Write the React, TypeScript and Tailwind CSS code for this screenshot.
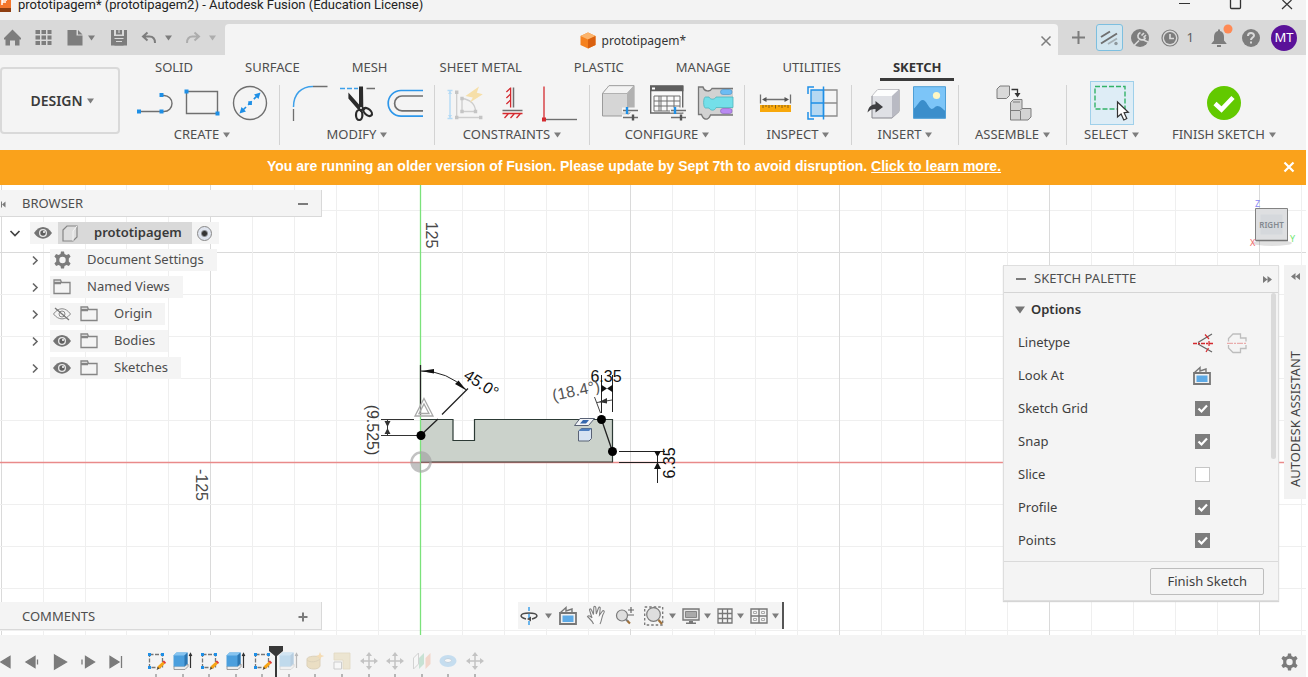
import React, { useState } from "react"

const RIBBON_TABS = [
  "SOLID",
  "SURFACE",
  "MESH",
  "SHEET METAL",
  "PLASTIC",
  "MANAGE",
  "UTILITIES",
  "SKETCH",
]

interface IconProps {
  w?: number
  h?: number
  className?: string
  children: React.ReactNode
}

function Svg({ w = 36, h = 36, className = "", children }: IconProps) {
  return (
    <svg
      width={w}
      height={h}
      viewBox={`0 0 ${w} ${h}`}
      fill="none"
      aria-hidden="true"
      className={`shrink-0 overflow-visible ${className}`}
    >
      {children}
    </svg>
  )
}

function Caret({ className = "text-[#7d7d7d]" }: { className?: string }) {
  return (
    <Svg w={7} h={6} className={className}>
      <path d="M0 0.5h7L3.5 5.5z" fill="currentColor" />
    </Svg>
  )
}

/* ---------- ribbon icons ---------- */

const GRAY = "#6f6f6f"
const BLUE = "#1e8fe6"
const RED = "#d42a2f"

const LineIcon = () => (
  <Svg>
    <path d="M3 26.5h22M26 10.5h2a8 8 0 0 1 0 16h-2" stroke={GRAY} strokeWidth="1.4" />
    <path d="M1 24.5h4v4H1zM23.5 24.5h4v4h-4zM23.5 8h4v4h-4z" fill={BLUE} />
  </Svg>
)

const RectIcon = () => (
  <Svg>
    <path d="M2.5 6.5h31v22h-31z" stroke={GRAY} strokeWidth="1.4" />
    <path d="M0.5 4.5h4v4h-4zM31.5 26.5h4v4h-4z" fill={BLUE} />
  </Svg>
)

const CircleIcon = () => (
  <Svg>
    <circle cx="18" cy="18" r="16.5" stroke={GRAY} strokeWidth="1.4" />
    <path d="M10.5 25.5L25.5 10.5" stroke={BLUE} strokeWidth="1.6" strokeDasharray="5 3" />
    <path d="M28.5 7.5l-2 6.5-4.5-4.5zM7.5 28.5l2-6.5 4.5 4.5zM16.3 16.3h3.6v3.6h-3.6z" fill={BLUE} />
  </Svg>
)

const FilletIcon = () => (
  <Svg>
    <path d="M2.5 22C2.5 9 10 1.5 22 1.5" stroke="#3da0ea" strokeWidth="1.5" />
    <path d="M22 1.5h14.5M2.5 24v12" stroke={GRAY} strokeWidth="1.3" />
  </Svg>
)

const TrimIcon = () => (
  <Svg>
    <path d="M1 3.5h18" stroke="#3da0ea" strokeWidth="1.6" strokeDasharray="5 2" />
    <path d="M27.5 3.5H36" stroke={GRAY} strokeWidth="1.5" />
    <path d="M20 1.5h4l0.3 20.5 2.4 2-5 3-3.4-3.3L9.4 13.5V7.5l10.6 12z" fill="#2b2b2b" />
    <ellipse cx="20.2" cy="30" rx="3.2" ry="5" stroke="#2b2b2b" strokeWidth="2.2" />
    <ellipse cx="28.7" cy="27" rx="3" ry="5" transform="rotate(-48 28.7 27)" stroke="#2b2b2b" strokeWidth="2.2" />
    <circle cx="22" cy="23" r="1" fill="#f4f4f4" />
  </Svg>
)

const OffsetIcon = () => (
  <Svg>
    <path d="M36 5.5H14a12.8 12.8 0 0 0 0 25.6h22" stroke="#2d97ea" strokeWidth="1.7" />
    <path d="M36 11H15a7.4 7.4 0 0 0 0 14.8h21" stroke={GRAY} strokeWidth="1.7" />
  </Svg>
)

const AutoConstrainIcon = () => (
  <Svg>
    <path d="M1.5 5.5h5M1.5 33.5h5M4 5.5v28" stroke="#b4daf5" strokeWidth="1.4" />
    <path d="M2 9l2-3 2 3zM2 30l2 3 2-3z" fill="#b4daf5" />
    <path d="M10.7 7v25.5H35M16 13.5v13h13.5c0-7-5-12-13.5-13" stroke="#cdcdcd" strokeWidth="1.3" />
    <path d="M9 5.5h3.4v3.4H9zM9 30.8h3.4v3.4H9zM33 30.8h3.4v3.4H33zM14.3 11.8h3.4v3.4h-3.4zM14.3 24.8h3.4v3.4h-3.4zM27.8 24.8h3.4v3.4h-3.4z" fill="#c4c4c4" />
    <path d="M33 1.5L19.5 11l7.3 1.5-2.8 5 12.8-8.2-6-1.6z" fill="#f6dfa9" />
  </Svg>
)

const HorizontalVerticalIcon = () => (
  <Svg>
    <path d="M19.5 2.5v20M8.5 25.5h20" stroke={GRAY} strokeWidth="1.5" />
    <path
      d="M16.6 2.5v20M16.6 3l-4.2 4M16.6 9l-4.2 4M16.6 15l-4.2 4M8.5 28.5h20M14.5 28.5l-4 4.5M20.5 28.5l-4 4.5M26.5 28.5l-4 4.5"
      stroke={RED}
      strokeWidth="1.3"
    />
  </Svg>
)

const PerpendicularIcon = () => (
  <Svg>
    <path d="M2 1.5v33" stroke={RED} strokeWidth="1.3" />
    <path d="M4 34.5h31" stroke={GRAY} strokeWidth="1.4" />
    <path d="M0 32.5h4v4H0z" fill={RED} />
  </Svg>
)

// slider pair shown in the corner of the "configure" icons
const Sliders = () => (
  <g>
    <path d="M21 25h16M21 32h16" stroke="#f4f4f4" strokeWidth="5" />
    <path d="M22 25.5h15M22 32.5h15" stroke={GRAY} strokeWidth="1.6" />
    <path d="M26 22v7" stroke={BLUE} strokeWidth="2.4" />
    <path d="M32 29.5v6" stroke="#555" strokeWidth="2.4" />
  </g>
)

const ConfigureModelIcon = () => (
  <Svg>
    <path d="M1.5 8.5L8 0.7h25v23l-7 7.3H1.5z" fill="#d6d6d6" stroke="#9b9b9b" />
    <path d="M1.5 8.5L8 0.7h25l-7 7.8z" fill="#f3f3f3" stroke="#9b9b9b" strokeWidth="0.7" />
    <path d="M26 8.5l7-7.8v23L26 31z" fill="#b1b1b1" />
    <Sliders />
  </Svg>
)

const ConfigureTableIcon = () => (
  <Svg>
    <path d="M1.7 1h32v27h-32z" fill="#fafafa" stroke="#666" strokeWidth="1.4" />
    <path d="M1 0.7h33.4v5.6H1z" fill="#5e5e5e" />
    <path d="M3 2.5h3v2H3z" fill="#fff" />
    <path d="M5 11h26v15H5zM5 16h26M5 21h26M10 11v15M12 11v15M18 11v15M25 11v15" stroke={GRAY} />
    <Sliders />
  </Svg>
)

const ThemeTableIcon = () => (
  <Svg>
    <path d="M1.5 2H6c1 4.500 7 5.500 9 1.500h21V30H13.500c-2 6-7 6-9-.5h-3z" fill="#d2d2d2" />
    <path d="M36 3.500H15c-2 4-8 3-9-1.500H1.500v27.500h3c2 6 7 6 9 0.500H36" stroke="#777" strokeWidth="1.300" />
    <path d="M36 12H19c-1 2.800-6 2.800-7 0H8.500c-2.500 0-2.500 11 0 11H12c1.500 3 6 3 7-.5h17z" fill="#74dfe9" stroke="#4fb5be" strokeWidth="0.800" />
    <rect x="23.500" y="4.500" width="11.500" height="5" rx="2.500" fill="#6cbcf4" stroke="#5698c9" strokeWidth="0.700" />
    <rect x="23.500" y="23.500" width="11.500" height="5" rx="2.500" fill="#b98af2" stroke="#9268c6" strokeWidth="0.700" />
  </Svg>
)

const MeasureIcon = () => (
  <Svg>
    <path d="M4.500 9.500v9M34.500 9.500v9M8 14.500h23" stroke="#707070" strokeWidth="1.300" />
    <path d="M6 14.500l4.500-2.500v5zM33 14.500l-4.500-2.500v5z" fill="#555" />
    <path d="M4 20h31v7H4z" fill="#f8a80b" />
    <path d="M7 20v3M10 20v2M13 20v3M16 20v2M19.500 20v3.500M23 20v2M26 20v3M29 20v2M32 20v3" stroke="#8c6012" />
  </Svg>
)

const SectionIcon = () => (
  <Svg>
    <path d="M20 5h13v26H20M20 18h13" stroke="#8c8c8c" strokeWidth="1.300" />
    <path d="M7 5h12.500v26H7z" fill="#b5d8f2" stroke={BLUE} strokeWidth="1.300" />
    <path d="M7 18h12.500M19.500 1.500v33M4 9V2h6M4 27v7h6" stroke={BLUE} strokeWidth="1.500" />
  </Svg>
)

const InsertDeriveIcon = () => (
  <Svg>
    <path d="M9 11l6-6.500h21v22L29 33H9z" fill="#dfe0e5" stroke="#85858c" />
    <path d="M9 11l6-6.500h21L29 11z" fill="#fdfdfd" />
    <path d="M29 11l7-6.500v22L29 33z" fill="#b9bac3" />
    <path d="M4.500 27.500c1-6 4-8 8-8.300V16l7.500 6-7.500 5.500V24c-4 0-6 1-8 3.500z" fill="#3f3f42" />
  </Svg>
)

const InsertImageIcon = () => (
  <Svg>
    <path d="M2.500 1.700h32v31.600h-32z" fill="#7cc5f8" />
    <circle cx="25.500" cy="10.500" r="3.600" fill="#fdf7c4" />
    <path d="M2.500 24c4-3 6-9 9-9 4 0 6 8 9 9 3 0 3-3 6-3 3 0 5 3 8 5v7.300h-32z" fill="#3b8ecb" />
    <path d="M2.500 1.700h32v31.600h-32z" stroke="#4f9fd6" />
  </Svg>
)

const AssembleIcon = () => (
  <Svg>
    <path d="M2 4l3-3h9.500v9.500l-3 3H2z" fill="#d9d9d9" stroke="#7c7c7c" />
    <path d="M16.500 4.500h6V9" stroke="#333" strokeWidth="1.300" />
    <path d="M19.500 8h6l-3 4.500z" fill="#333" />
    <path d="M15.500 17.500l3-3h8.500v9h9v8.500l-3 3H15.500z" fill="#d3d3d3" stroke="#7c7c7c" />
    <path d="M15.500 25.500h9.500l2-2M25.500 26v9M18 17h7" stroke="#7c7c7c" />
  </Svg>
)

const SelectIcon = () => (
  <Svg w={42} h={42}>
    <path d="M4 4.500h30v22.500H4z" stroke="#33b368" strokeWidth="1.400" strokeDasharray="5 2" />
    <path d="M26.500 20v15l3.600-3 2.700 6 3-1.500-2.700-5.800 4.300-.5z" fill="#fff" stroke="#333" strokeWidth="1.200" />
  </Svg>
)

const FinishIcon = () => (
  <Svg>
    <circle cx="18" cy="18" r="17" fill="#62c900" />
    <path d="M9 18.500l6.500 6L27 12.500" stroke="#fff" strokeWidth="4.500" />
  </Svg>
)

/* ---------- small shared icons ---------- */

const GEAR =
  "M8 0.500h3l.5 2.500 2 1 2.400-1 1.700 2.600L15.800 7.500v3l1.800 1.900-1.700 2.600-2.400-1-2 1-.5 2.500H8L7.500 15l-2-1-2.400 1-1.700-2.600 1.800-1.900v-3L1.400 5.600 3.100 3l2.400 1 2-1z"

const GearIcon = () => (
  <Svg w={18} h={18}>
    <path d={GEAR} fill="#7b7b7b" />
    <circle cx="9.500" cy="9" r="3.200" fill="#f4f4f4" />
  </Svg>
)

const EyeIcon = () => (
  <Svg w={18} h={12}>
    <path d="M0 6c5-8 13-8 18 0-5 7.500-13 7.500-18 0z" fill="#747474" />
    <circle cx="9" cy="6" r="4" fill="#e9e9e9" />
    <circle cx="9" cy="6" r="2.700" fill="#5f5f5f" />
    <circle cx="10" cy="5" r="1" fill="#fff" />
  </Svg>
)

const EyeOffIcon = () => (
  <Svg w={18} h={12}>
    <path d="M0.500 6c5-7 12-7 17 0-5 6.500-12 6.500-17 0z" stroke="#8a8a8a" />
    <circle cx="9" cy="6" r="3" stroke="#8a8a8a" />
    <path d="M2 0l14 12" stroke="#777" strokeWidth="1.300" />
  </Svg>
)

const FolderIcon = () => (
  <Svg w={18} h={16}>
    <path d="M1 3.500h16v11H1zM1 3.500V1h6.500l1 2.500M1 4.500h7" stroke="#858585" strokeWidth="1.300" />
  </Svg>
)

const ComponentIcon = () => (
  <Svg w={16} h={17}>
    <path d="M1 5l4-4h10v11l-4 4H1z" fill="#dedede" stroke="#858585" strokeWidth="1.200" />
    <path d="M11 16V6l4-5" stroke="#f5f5f5" />
  </Svg>
)

const LookAtIcon = () => (
  <Svg w={18} h={18}>
    <path d="M1 6h16v11H1z" fill="#f0f0f0" stroke="#777" strokeWidth="1.800" />
    <path d="M3.500 8.500h11v6.500h-11z" fill="#5daae6" />
    <path d="M1 6l6-5.500v3.500L13 2v3" stroke="#777" strokeWidth="1.400" />
  </Svg>
)

/* ---------- layout parts ---------- */

interface GroupProps {
  label: string
  tools: { name: string; icon: React.ReactNode }[]
  className?: string
}

function RibbonGroup({ label, tools, className = "px-[11px]" }: GroupProps) {
  return (
    <div className="flex">
      <div className={`flex flex-col items-center ${className}`}>
        <div className="flex h-[44px] items-center gap-3">
          {tools.map((tool) => (
            <button key={tool.name} type="button" aria-label={tool.name}>
              {tool.icon}
            </button>
          ))}
        </div>
        <button type="button" className="flex h-5 items-center gap-1 whitespace-nowrap">
          {label}
          <Caret />
        </button>
      </div>
      <div className="mt-1 w-px bg-[#d3d3d3]" />
    </div>
  )
}

function TitleBar() {
  return (
    <header className="flex h-5 items-start overflow-hidden bg-[#f3f3f3] text-[#222]">
      <Svg w={11} h={12}>
        <path d="M0 0h11v8H0z" fill="#f4762c" />
        <path d="M0 8h11v4H0z" fill="#8f3f12" />
        <path d="M2 5V0h5M2 2h4" stroke="#fff" strokeWidth="1.500" />
      </Svg>
      <h1 className="-mt-[5px] ml-[7px] flex-1 font-['Roboto',sans-serif] text-[13px] leading-[20px]">
        prototipagem* (prototipagem2) - Autodesk Fusion (Education License)
      </h1>
      <div className="flex gap-10 pr-[13px]">
        <button type="button" aria-label="Minimize">
          <Svg w={11} h={10}>
            <path d="M0 3.500h11" stroke="#333" />
          </Svg>
        </button>
        <button type="button" aria-label="Maximize">
          <Svg w={11} h={10}>
            <path d="M0.500 0v7.500a1 1 0 0 0 1 1h8a1 1 0 0 0 1-1V0" stroke="#333" strokeWidth="1.300" />
          </Svg>
        </button>
        <button type="button" aria-label="Close window">
          <Svg w={12} h={10}>
            <path d="M1.500 0L11 9M10.500 0L1 9" stroke="#333" strokeWidth="1.200" />
          </Svg>
        </button>
      </div>
    </header>
  )
}

function DocumentBar() {
  return (
    <div className="flex h-[35px] bg-[#d9d9d9] text-[#7d7d7d]">
      <div className="flex w-[225px] shrink-0 items-center pl-1">
        <button type="button" aria-label="Home">
          <Svg w={17} h={17}>
            <path d="M8.500 0.500L17 9v1.500h-1.500V16.500h-4.500v-5H6v5H1.500v-6H0V9z" fill="currentColor" />
          </Svg>
        </button>
        <button type="button" aria-label="Data panel" className="ml-[14px]">
          <Svg w={17} h={17}>
            <path
              d="M0.500 1h4.500v4H0.500zM6.500 1h4.500v4H6.500zM12.500 1h4v4h-4zM0.500 6.500h4.500v4H0.500zM6.500 6.500h4.500v4H6.500zM12.500 6.500h4v4h-4zM0.500 12h4.500v4H0.500zM6.500 12h4.500v4H6.500zM12.500 12h4v4h-4z"
              fill="currentColor"
            />
          </Svg>
        </button>
        <button type="button" aria-label="File" className="ml-[15px] flex items-center gap-[5px]">
          <Svg w={16} h={17}>
            <path d="M0.500 1h9v5.500h6V16.500h-15z" fill="currentColor" />
            <path d="M11 1l4.500 4.500H11z" fill="currentColor" />
          </Svg>
          <Caret />
        </button>
        <button type="button" aria-label="Save" className="ml-4">
          <Svg w={16} h={17}>
            <path d="M0 1h3v6h10V1h3v15.500H0z" fill="currentColor" />
            <path d="M5 1h6v4.500H5zM3.500 10h9v6.500h-9z" fill="currentColor" />
            <path d="M3.500 9.500h9M5 12.500h6M8 1v3" stroke="#d9d9d9" />
          </Svg>
        </button>
        <button type="button" aria-label="Undo" className="ml-[15px] flex items-center gap-[9px]">
          <Svg w={14} h={12}>
            <path d="M5.500 0.500L1 4.500l4.500 4M1.500 4.500h6c3 0 5.500 2 5.500 6.500" stroke="currentColor" strokeWidth="2" />
          </Svg>
          <Caret />
        </button>
        <button type="button" aria-label="Redo" className="ml-[14px] flex items-center gap-[9px] text-[#adadad]">
          <Svg w={14} h={12}>
            <path d="M8.500 0.500L13 4.500l-4.500 4M12.500 4.500h-6C3.500 4.500 1 6.500 1 11" stroke="currentColor" strokeWidth="2" />
          </Svg>
          <Caret className="text-[#adadad]" />
        </button>
      </div>

      <div className="mt-1 flex min-w-0 flex-1 items-center rounded-t-[4px] bg-[#f4f4f4] pt-[2px] pr-[7px]">
        <div className="flex flex-1 items-center justify-center gap-[6px] text-[12px] text-[#333]">
          <Svg w={16} h={17}>
            <path d="M8 0.500l7.500 3.500v9L8 16.500 0.500 13V4z" fill="#f58220" />
            <path d="M8 0.500l7.500 3.500L8 7.500 0.500 4z" fill="#fcb46c" />
            <path d="M8 7.500l7.500-3.500v9L8 16.500z" fill="#d9600f" />
          </Svg>
          prototipagem*
        </div>
        <button type="button" aria-label="Close document">
          <Svg w={10} h={10}>
            <path d="M0.500 0.500l9 9M9.500 0.500l-9 9" stroke="#7d7d7d" strokeWidth="1.500" />
          </Svg>
        </button>
      </div>

      <div className="flex shrink-0 items-center pr-[9px] pl-[14px]">
        <button type="button" aria-label="New document">
          <Svg w={13} h={13}>
            <path d="M6.500 0v13M0 6.500h13" stroke="currentColor" strokeWidth="2" />
          </Svg>
        </button>
        <button
          type="button"
          aria-label="Extensions"
          className="ml-[11px] flex size-[27px] items-center justify-center rounded-[3px] border border-[#7dbfdf] bg-[#d3e6ef]"
        >
          <Svg w={18} h={14}>
            <path d="M1 6l9-5.500M1 12.500L17 2.500" stroke="#707070" strokeWidth="2" />
            <path d="M8 13l9-5.500" stroke="#a5b0b5" strokeWidth="1.800" />
            <circle cx="16" cy="12.500" r="1.700" fill="#8d979b" />
          </Svg>
        </button>
        <button type="button" aria-label="Job status" className="ml-2">
          <Svg w={18} h={18}>
            <circle cx="9" cy="9" r="9" fill="currentColor" />
            <path d="M2.500 17L8 11.500M11.500 10.500l5.500 2.500M9.500 3.500C6.500 5 6 8 8.500 10s5.500.5 6-1.500M10.500 6.500l2.500-2.500M12.500 8.500L15 6" stroke="#d9d9d9" strokeWidth="1.700" />
          </Svg>
        </button>
        <button type="button" className="ml-3 flex items-center gap-2 text-[13px] text-[#5d5d5d]" aria-label="Recent jobs: 1">
          <Svg w={18} h={18}>
            <circle cx="9" cy="9" r="8" stroke="currentColor" className="text-[#7d7d7d]" strokeWidth="1.200" />
            <circle cx="9" cy="9" r="6" fill="#7d7d7d" />
            <path d="M9 5v4.500h4" stroke="#d9d9d9" strokeWidth="1.700" />
          </Svg>
          1
        </button>
        <button type="button" aria-label="Notifications" className="ml-[17px]">
          <Svg w={16} h={18}>
            <path d="M7 0.500h2V2c3 .8 4 3 4 6v3.500l2.500 3v.5H0.500v-.5l2.500-3V8c0-3 1-5.200 4-6zM6 16h4v2H6z" fill="currentColor" />
            <circle cx="17" cy="0" r="4.500" fill="#ff8a55" />
          </Svg>
        </button>
        <button type="button" aria-label="Help" className="ml-[15px]">
          <Svg w={18} h={18}>
            <circle cx="9" cy="9" r="9" fill="currentColor" />
            <path d="M6 7c0-4 6-3.800 6-.5 0 2-3 2-3 4.500M9 12.500v2" stroke="#d9d9d9" strokeWidth="2" />
          </Svg>
        </button>
        <button
          type="button"
          className="ml-[11px] flex size-[26px] items-center justify-center rounded-full bg-[#5a1299] text-[13px] text-white"
        >
          MT
        </button>
      </div>
    </div>
  )
}

function Ribbon({ onFinish }: { onFinish: () => void }) {
  return (
    <div className="flex shrink-0 bg-[#f4f4f4] pb-[5px] text-[13px] text-[#4e4e4e]">
      <button
        type="button"
        className="mt-3 flex h-[67px] w-[120px] shrink-0 items-center justify-center gap-1 rounded-[4px] border-2 border-[#d9d9d9] pl-1 text-[14px] font-semibold text-[#3a3a3a]"
      >
        DESIGN
        <Caret />
      </button>
      <div className="flex min-w-0 flex-1 flex-col">
        <nav className="flex h-[26px] gap-[26px] pl-[22px]">
          {RIBBON_TABS.map((tab) => (
            <button
              key={tab}
              type="button"
              className={
                tab === "SKETCH"
                  ? "border-b-3 border-[#3a3a3a] px-[13px] pt-[3px] font-bold whitespace-nowrap text-[#333]"
                  : "border-b-3 border-transparent px-[13px] pt-[3px] whitespace-nowrap"
              }
            >
              {tab}
            </button>
          ))}
        </nav>
        <div className="flex pl-[5px]">
          <RibbonGroup
            label="CREATE"
            tools={[
              { name: "Line", icon: <LineIcon /> },
              { name: "Rectangle", icon: <RectIcon /> },
              { name: "Circle", icon: <CircleIcon /> },
            ]}
          />
          <RibbonGroup
            label="MODIFY"
            tools={[
              { name: "Fillet", icon: <FilletIcon /> },
              { name: "Trim", icon: <TrimIcon /> },
              { name: "Offset", icon: <OffsetIcon /> },
            ]}
          />
          <RibbonGroup
            label="CONSTRAINTS"
            tools={[
              { name: "AutoConstrain", icon: <AutoConstrainIcon /> },
              { name: "Horizontal/Vertical", icon: <HorizontalVerticalIcon /> },
              { name: "Perpendicular", icon: <PerpendicularIcon /> },
            ]}
          />
          <RibbonGroup
            label="CONFIGURE"
            tools={[
              { name: "Configure model", icon: <ConfigureModelIcon /> },
              { name: "Configuration table", icon: <ConfigureTableIcon /> },
              { name: "Theme table", icon: <ThemeTableIcon /> },
            ]}
          />
          <RibbonGroup
            label="INSPECT"
            tools={[
              { name: "Measure", icon: <MeasureIcon /> },
              { name: "Section analysis", icon: <SectionIcon /> },
            ]}
          />
          <RibbonGroup
            label="INSERT"
            tools={[
              { name: "Insert derive", icon: <InsertDeriveIcon /> },
              { name: "Insert image", icon: <InsertImageIcon /> },
            ]}
          />
          <RibbonGroup
            label="ASSEMBLE"
            className="px-4"
            tools={[{ name: "New component", icon: <AssembleIcon /> }]}
          />
          <div className="flex flex-col items-center px-[17px]">
            <button type="button" aria-label="Select tool" className="border border-[#9fd0ea] bg-[#deedf6]">
              <SelectIcon />
            </button>
            <button type="button" className="flex h-5 items-center gap-1 whitespace-nowrap">
              SELECT
              <Caret />
            </button>
          </div>
          <div className="flex flex-col items-center px-4">
            <button type="button" aria-label="Finish" onClick={onFinish} className="flex h-[44px] items-center">
              <FinishIcon />
            </button>
            <button type="button" className="flex h-5 items-center gap-1 whitespace-nowrap">
              FINISH SKETCH
              <Caret />
            </button>
          </div>
        </div>
      </div>
    </div>
  )
}

function UpdateBanner({ onClose }: { onClose: () => void }) {
  return (
    <div className="flex h-[35px] shrink-0 items-center bg-[#faa21b] pr-3 font-['Liberation_Sans',sans-serif] text-[14px] font-bold text-white">
      <p className="flex-1 pr-4 pb-[2px] text-center">
        You are running an older version of Fusion. Please update by Sept 7th to avoid disruption.{" "}
        <a href="#update" className="underline">
          Click to learn more.
        </a>
      </p>
      <button type="button" aria-label="Dismiss" onClick={onClose} className="pb-[2px]">
        <Svg w={10} h={10}>
          <path d="M0.500 0.500l9 9M9.500 0.500l-9 9" stroke="#fff" strokeWidth="2.200" />
        </Svg>
      </button>
    </div>
  )
}

/* ---------- sketch canvas ---------- */

const ORIGIN_X = 421
const ORIGIN_Y = 277
const GRID_STEP = 41.93

function SketchCanvas() {
  const steps = Array.from({ length: 71 }, (_, i) => i - 20)

  return (
    <svg className="absolute inset-0 h-full w-full font-['Liberation_Sans',sans-serif] text-[16px]" aria-label="Sketch">
      {steps.map((i) => {
        const x = Math.round(ORIGIN_X + i * GRID_STEP) - 0.5
        const y = ORIGIN_Y + i * 42 + 0.5
        const color = i % 5 === 0 ? "#dadada" : "#efefef"
        return (
          <g key={i} stroke={color}>
            <line x1={x} x2={x} y1="0" y2="100%" />
            <line x1="0" x2="100%" y1={y} y2={y} />
          </g>
        )
      })}

      <path d="M421 234.500h32v21h21.500v-21h138V277H421z" fill="#cbd2cb" />
      <line x1="0" x2="100%" y1="277.500" y2="277.500" stroke="#e98a8a" strokeWidth="1.300" />
      <line x1="420.500" x2="420.500" y1="0" y2="100%" stroke="#7be27b" strokeWidth="1.300" />
      <path d="M421 234.500h32v21h21.500v-21h138V277H421" stroke="#2c3a35" strokeWidth="1.200" fill="none" />
      <path d="M421 250l17-16M601.500 234.500l11 32" stroke="#222" strokeWidth="1.300" />

      {/* 45 degree dimension */}
      <g stroke="#222" fill="none">
        <path d="M420.500 180v50M442 229.500l26-26" strokeWidth="1.300" />
        <path d="M421 186a64 64 0 0 1 45.500 19" />
      </g>
      <path d="M421 186l13-2v4.500zM466.500 205.500l-11.500-6.500 3.500-3.500z" fill="#111" />
      <text x="481" y="204" textAnchor="middle" transform="rotate(33 481 199)" fill="#111">
        45.0°
      </text>

      {/* chamfer height */}
      <path d="M381 234.500h33M381 250.500h37M387.500 234v16" stroke="#333" fill="none" />
      <path d="M387.500 242l-3-6h6zM387.500 243l-3 6h6z" fill="#333" />
      <text x="372" y="245" textAnchor="middle" transform="rotate(90 372 245)" dominantBaseline="central" fill="#3d3d3d">
        (9.525)
      </text>

      {/* top right offsets */}
      <path d="M601.500 190v38M612.500 190v37" stroke="#222" />
      <path d="M607 203.500l-6-4v8zM607 203.500l6-4v8z" fill="#111" />
      <path d="M594.500 212l6 16M597 217.500l15-2.500" stroke="#444" fill="none" />
      <path d="M599 217l8-4v5.500z" fill="#333" />
      <text x="606" y="197" textAnchor="middle" fill="#111">
        6.35
      </text>
      <text x="576" y="211" textAnchor="middle" transform="rotate(-12 576 206)" fill="#555">
        (18.4°)
      </text>

      {/* right edge offset */}
      <path d="M619 266.500h46M619 277.500h46M657.500 266v32" stroke="#222" fill="none" />
      <path d="M657.500 272l-3.500-6h7zM657.500 277l-3.500 7h7z" fill="#111" />
      <text x="669" y="278" textAnchor="middle" transform="rotate(-90 669 278)" dominantBaseline="central" fill="#111">
        6.35
      </text>

      <path d="M424 213.500l9 17.500h-18zM424 219l5 9.500h-10z" stroke="#a8a8a8" strokeWidth="1.300" fill="#fff" fillOpacity="0.400" />

      {/* origin marker */}
      <g opacity="0.650">
        <circle cx="421" cy="277" r="9.500" stroke="#a2a2a2" strokeWidth="2.500" fill="none" />
        <path d="M421 277v-9a9 9 0 0 1 9 9zM421 277v9a9 9 0 0 1-9-9z" fill="#a2a2a2" />
      </g>

      {/* work plane and body glyphs */}
      <path d="M580 233.500h14.500l-6 7H574.500z" fill="#f2f4f8" stroke="#596275" />
      <path d="M583 235h6l-3 3.500h-6z" fill="#3567ad" />
      <path d="M578.500 246l3-2.500h10v10l-2.500 2.500h-10.500z" fill="#d7e3f2" stroke="#596275" />
      <path d="M578.500 246l3-2.500h10l-2.500 2.500z" fill="#4e7fc0" />

      <circle cx="421" cy="250.500" r="4.500" fill="#000" />
      <circle cx="601.500" cy="234.500" r="4.500" fill="#000" />
      <circle cx="612.500" cy="266.500" r="4.500" fill="#000" />

      <text x="431" y="50" textAnchor="middle" transform="rotate(90 431 50)" dominantBaseline="central" fill="#4a4a4a">
        125
      </text>
      <text x="201" y="300" textAnchor="middle" transform="rotate(90 201 300)" dominantBaseline="central" fill="#4a4a4a">
        -125
      </text>
    </svg>
  )
}

/* ---------- browser ---------- */

interface TreeItem {
  label: string
  icon: "gear" | "folder"
  eye?: "on" | "off"
}

const TREE: TreeItem[] = [
  { label: "Document Settings", icon: "gear" },
  { label: "Named Views", icon: "folder" },
  { label: "Origin", icon: "folder", eye: "off" },
  { label: "Bodies", icon: "folder", eye: "on" },
  { label: "Sketches", icon: "folder", eye: "on" },
]

function BrowserPanel() {
  return (
    <section className="text-[13px] text-[#4e4e4e]">
      <div className="flex h-[27px] items-center border-r border-b border-[#d9d9d9] bg-[#f4f4f4] pt-[2px] pr-[13px]">
        <Svg w={6} h={7}>
          <path d="M0 0.500v6L-3 3.500zM1 0.500h1v6H1zM5.500 0.500v6l-3.500-3z" fill="#7b7b7b" />
        </Svg>
        <h2 className="ml-4 flex-1">BROWSER</h2>
        <button type="button" aria-label="Collapse browser">
          <Svg w={10} h={3}>
            <path d="M0 1h10" stroke="#7b7b7b" strokeWidth="2" />
          </Svg>
        </button>
      </div>

      <ul className="mt-[5px] flex flex-col gap-[5px]">
        <li className="flex h-[22px] items-center">
          <button type="button" aria-label="Collapse prototipagem" className="ml-[10px]">
            <Svg w={10} h={7}>
              <path d="M0.500 1l4.500 4.500L9.500 1" stroke="#444" strokeWidth="1.700" />
            </Svg>
          </button>
          <div className="ml-[10px] flex h-full items-center bg-[#f4f4f4] pr-[7px] pl-1">
            <EyeIcon />
            <span className="ml-[6px] flex h-full items-center gap-4 bg-[#d9d9d9] pr-[10px] pl-1 font-semibold text-[#3a3a3a]">
              <ComponentIcon />
              prototipagem
            </span>
            <input
              type="radio"
              defaultChecked
              aria-label="Activate prototipagem"
              className="ml-[5px] size-[15px] appearance-none rounded-full border border-[#888] bg-[radial-gradient(circle,#333_2px,#dfe4ee_4px)]"
            />
          </div>
        </li>
        {TREE.map((item) => (
          <li key={item.label} className="flex h-[22px] items-center">
            <button type="button" aria-label={`Expand ${item.label}`} className="ml-[32px]">
              <Svg w={6} h={9}>
                <path d="M1 0.500l4 4-4 4" stroke="#666" strokeWidth="1.600" />
              </Svg>
            </button>
            <div className="ml-[12px] flex h-full items-center gap-[9px] bg-[#f4f4f4] pr-[13px] pl-[3px]">
              {item.eye === "on" && <EyeIcon />}
              {item.eye === "off" && <EyeOffIcon />}
              {item.icon === "gear" ? <GearIcon /> : <FolderIcon />}
              <span className="ml-[7px]">{item.label}</span>
            </div>
          </li>
        ))}
      </ul>
    </section>
  )
}

function CommentsPanel() {
  return (
    <section className="flex h-7 items-center border-r border-b border-[#d9d9d9] bg-[#f4f4f4] pt-[2px] pr-[13px] pl-[22px] text-[13px] text-[#4e4e4e]">
      <h2 className="flex-1">COMMENTS</h2>
      <button type="button" aria-label="Add comment">
        <Svg w={10} h={10}>
          <path d="M5 0.500v9M0.500 5h9" stroke="#7b7b7b" strokeWidth="2" />
        </Svg>
      </button>
    </section>
  )
}

/* ---------- navigation bar ---------- */

function NavigationBar() {
  return (
    <div role="toolbar" aria-label="Navigation" className="flex h-[27px] items-center border-r-2 border-[#555] bg-[#f4f4f4] pr-[3px] pl-[2px]">
      <button type="button" aria-label="Orbit" className="flex items-center gap-[7px]">
        <Svg w={18} h={18}>
          <path d="M9 0v4M9 6.500v5M9 14v4" stroke="#3da0ea" strokeWidth="1.500" />
          <path d="M6 12c-7-1.500-7-6 3-6s10 4.500 3 6" stroke="#4c4c4c" strokeWidth="1.500" />
          <path d="M11 9.500v5l-4-2.500z" fill="#4c4c4c" />
        </Svg>
        <Caret />
      </button>
      <button type="button" aria-label="Look at" className="ml-[7px]">
        <LookAtIcon />
      </button>
      <button type="button" aria-label="Pan" className="ml-[10px]">
        <Svg w={19} h={19}>
          <path
            d="M6.500 18c-1-3-3.500-5-6-7.500 1-1.500 3-.5 4.500 1.500L2.500 4c0-1.500 1.500-1.500 2 0l2 4.500L6.800 1.500c0-1.500 1.700-1.500 2 0l.5 6.500L11.500 2c.5-1.500 2-1 1.700.5L12.500 9l3-4c1-1 2.300 0 1.500 1.500C14.500 10 15 14.500 13 18"
            fill="#fafafa"
            stroke="#808080"
            strokeWidth="1.100"
          />
        </Svg>
      </button>
      <button type="button" aria-label="Zoom" className="ml-[9px]">
        <Svg w={20} h={19}>
          <circle cx="7" cy="9.500" r="5.500" fill="#dedede" stroke="#7b7b7b" strokeWidth="1.200" />
          <path d="M11 13.500l2 2" stroke="#7b7b7b" strokeWidth="2" />
          <path d="M12.500 15l2.500 2.500" stroke="#a0713a" strokeWidth="2.200" />
          <path d="M16 1v6M13 4h6M13 9h6" stroke="#666" strokeWidth="1.200" />
        </Svg>
      </button>
      <button type="button" aria-label="Fit" className="ml-[9px] flex items-center gap-[5px]">
        <Svg w={20} h={20}>
          <path d="M0.700 1h18v18h-18z" stroke="#777" strokeWidth="1.300" strokeDasharray="2.500 2" />
          <circle cx="9.500" cy="8.500" r="6.800" fill="#dedede" stroke="#7b7b7b" strokeWidth="1.200" />
          <path d="M14.500 14l3.500 4" stroke="#a0713a" strokeWidth="2.200" />
        </Svg>
        <Caret />
      </button>
      <button type="button" aria-label="Display settings" className="ml-[6px] flex items-center gap-1">
        <Svg w={18} h={16}>
          <path d="M1 1h16v11H1z" fill="#e6e6e6" stroke="#777" strokeWidth="1.400" />
          <path d="M3.500 3.500h11v6h-11z" fill="#a9a9a9" stroke="#858585" />
          <path d="M7 13h4v1.500h3V16H4v-1.500h3z" fill="#777" />
        </Svg>
        <Caret />
      </button>
      <button type="button" aria-label="Grid and snaps" className="ml-[6px] flex items-center gap-1">
        <Svg w={16} h={16}>
          <path d="M1 1h14v14H1zM5.500 1v14M10.500 1v14M1 5.500h14M1 10.500h14" stroke="#777" strokeWidth="1.300" />
        </Svg>
        <Caret />
      </button>
      <button type="button" aria-label="Viewports" className="ml-[6px] flex items-center gap-1">
        <Svg w={18} h={16}>
          <path d="M1 1h16v14H1zM9 1v14M1 8h16" stroke="#777" strokeWidth="1.400" />
          <path d="M3.500 3.500h3v2h-3zM11.500 3.500h3v2h-3zM3.500 10.500h3v2h-3zM11.500 10.500h3v2h-3z" stroke="#aaa" />
        </Svg>
        <Caret />
      </button>
    </div>
  )
}

/* ---------- view cube and palette ---------- */

function ViewCube() {
  return (
    <svg width="50" height="54" viewBox="0 -4 50 54" className="font-['Noto_Sans',sans-serif]" aria-label="View cube">
      <ellipse cx="24" cy="44" rx="20" ry="3" fill="#000" opacity="0.120" />
      <path d="M7.500 9.500h32v32h-32z" fill="#dedfe1" stroke="#838383" />
      <path d="M12.500 15.500h22v20h-22z" fill="#d5d8dc" />
      <path d="M8 41.500h32" stroke="#777" strokeWidth="1.500" />
      <text x="23.500" y="29" textAnchor="middle" fontSize="8" fontWeight="600" fill="#83898f">
        RIGHT
      </text>
      <text x="7" y="8" fontSize="9" fill="#8a8af5">Z</text>
      <text x="2" y="47" fontSize="9" fill="#f06a6a">X</text>
      <text x="42" y="43" fontSize="9" fill="#6fe56f">Y</text>
    </svg>
  )
}

const PALETTE_TOGGLES = [
  { label: "Sketch Grid", checked: true },
  { label: "Snap", checked: true },
  { label: "Slice", checked: false },
  { label: "Profile", checked: true },
  { label: "Points", checked: true },
]

function SketchPalette({ onFinish }: { onFinish: () => void }) {
  const [toggles, setToggles] = useState(PALETTE_TOGGLES)

  const toggle = (label: string) =>
    setToggles((prev) => prev.map((t) => (t.label === label ? { ...t, checked: !t.checked } : t)))

  return (
    <section className="w-[276px] border border-[#dedede] bg-[#f4f4f4] text-[13px] text-[#3f3f3f] shadow-[0_1px_1px_#d5d5d5]">
      <div className="flex h-[27px] items-center border-b border-[#d5d5d5] pr-[6px] pl-3 text-[#4e4e4e]">
        <button type="button" aria-label="Collapse palette">
          <Svg w={10} h={3}>
            <path d="M0 1h10" stroke="#7b7b7b" strokeWidth="2" />
          </Svg>
        </button>
        <h2 className="ml-2 flex-1">SKETCH PALETTE</h2>
        <button type="button" aria-label="Dock palette">
          <Svg w={9} h={7}>
            <path d="M0 0l4.500 3.500L0 7zM4.500 0L9 3.500 4.500 7z" fill="#7b7b7b" />
          </Svg>
        </button>
      </div>

      <div className="flex">
        <div className="flex-1 pl-[14px]">
          <button type="button" className="-ml-[3px] flex h-[33px] items-center gap-[6px] font-semibold text-[#333]">
            <Svg w={10} h={8}>
              <path d="M0 0.500h10L5 7.500z" fill="#757575" />
            </Svg>
            Options
          </button>
          <div className="flex h-[33px] items-center">
            <span className="w-[175px]">Linetype</span>
            <button type="button" aria-label="Construction">
              <Svg w={20} h={20}>
                <path d="M19 1L5 9.500M5 11l14 8" stroke="#666" strokeWidth="1.300" />
                <path d="M0 10.500h20" stroke={RED} strokeWidth="1.300" strokeDasharray="4 1 2 1" />
                <path d="M12 1.500l4 4.500M16 8v5M13 19l2.500-4" stroke={RED} strokeWidth="1.200" />
              </Svg>
            </button>
            <button type="button" aria-label="Centerline" className="ml-[14px]">
              <Svg w={20} h={20}>
                <path d="M1.500 8.500V5.500L6 1h7.500v4H19v3.500M1.500 12v3L6 19.500h7.500v-4H19V12" stroke="#bdbdbd" strokeWidth="1.300" />
                <path d="M0 10.300h20" stroke="#e79a9a" strokeDasharray="6 1 2 1" />
              </Svg>
            </button>
          </div>
          <div className="flex h-[33px] items-center">
            <span className="w-[175px]">Look At</span>
            <button type="button" aria-label="Look at sketch">
              <LookAtIcon />
            </button>
          </div>
          {toggles.map((t) => (
            <label key={t.label} className="flex h-[33px] items-center">
              <span className="w-[177px]">{t.label}</span>
              <span className="relative flex">
                <input
                  type="checkbox"
                  checked={t.checked}
                  onChange={() => toggle(t.label)}
                  className="size-[15px] appearance-none border border-[#c6c6c6] bg-white checked:border-[#7d7d7d] checked:bg-[#7d7d7d]"
                />
                {t.checked && (
                  <Svg w={15} h={15} className="pointer-events-none absolute inset-0">
                    <path d="M3.500 7.500l3 3 5.500-6" stroke="#fff" strokeWidth="2.200" />
                  </Svg>
                )}
              </span>
            </label>
          ))}
        </div>
        <div className="mr-[2px] h-[166px] w-[5px] rounded-full bg-[#dadada]" />
      </div>

      <div className="mt-1 flex justify-end border-t border-[#dadada] px-[14px] pt-[6px] pb-[5px]">
        <button
          type="button"
          onClick={onFinish}
          className="h-[27px] rounded-[2px] border border-[#bdbdbd] px-4"
        >
          Finish Sketch
        </button>
      </div>
    </section>
  )
}

function AssistantTab() {
  return (
    <button
      type="button"
      className="flex h-[234px] w-[22px] flex-col items-center justify-between bg-[#f2f2f2] pt-2 pb-3 text-[13px] text-[#444]"
    >
      <Svg w={9} h={7}>
        <path d="M4.500 0v7L0 3.500zM9 0v7L4.500 3.500z" fill="#7b7b7b" />
      </Svg>
      <span className="rotate-180 leading-none whitespace-nowrap [writing-mode:vertical-rl]">AUTODESK ASSISTANT</span>
    </button>
  )
}

/* ---------- timeline ---------- */

const SketchFeature = () => (
  <Svg w={18} h={18}>
    <path d="M2.500 2.500h13v13h-13z" stroke="#777" strokeWidth="1.300" strokeDasharray="4 1.500" />
    <path d="M1 1h3v3H1zM14 1h3v3h-3zM1 14h3v3H1z" fill={BLUE} />
    <path d="M10 17.500l1-3.500 5-4.500 2 2-5 5z" fill="#f7a416" />
    <path d="M15.500 9.500l2.500 2.500 1-1.500-2-2z" fill="#e03a3a" />
    <path d="M9.500 18l1.500-3 1.500 1.500z" fill="#444" />
  </Svg>
)

const ExtrudeFeature = () => (
  <Svg w={18} h={18}>
    <path d="M0 14h11l3-2v2.500l-3 3H0z" fill="#ececec" stroke="#888" strokeWidth="0.800" />
    <path d="M-0.500 3.500l3-3h11v11l-3 3H-0.500z" fill="#4b9fdd" />
    <path d="M-0.500 3.500l3-3h11l-3 3z" fill="#86c4f0" />
    <path d="M10.500 3.500l3-3v11l-3 3z" fill="#2c77b2" />
    <path d="M16.500 2v14M15.200 4l1.300-2.500L17.800 4" stroke="#333" strokeWidth="1.200" />
  </Svg>
)

const MoveFeature = () => (
  <Svg w={18} h={18}>
    <path d="M9 3v12M3 9h12" stroke="#555" strokeWidth="1.500" />
    <path d="M9 0l3 4H6zM9 18l3-4H6zM0 9l4-3v6zM18 9l-4-3v6z" fill="#555" />
  </Svg>
)

const FormFeature = () => (
  <Svg w={18} h={18}>
    <path d="M1 7c0-3 11-4 13-1v8c-1 4-11 4-13 0z" fill="#d5ae55" stroke="#a68337" />
    <path d="M1 8c3 3 10 2 13-1" stroke="#a68337" />
    <path d="M14 0l1.200 3 3 1-3 1.200L14 8l-1.200-2.800-3-1.200 3-1z" fill="#f5a623" />
  </Svg>
)

const ShellFeature = () => (
  <Svg w={18} h={18}>
    <path d="M1 1h16v16H10V8H1z" fill="#dcc482" stroke="#b79c55" strokeWidth="0.800" />
    <path d="M1 10h7.500v7H1z" fill="#fff" stroke="#777" />
  </Svg>
)

const PlaneFeature = () => (
  <Svg w={18} h={18}>
    <path d="M0.500 6l5-5v11l-5 5z" fill="#fff" stroke="#888" />
    <path d="M6 6l5-5v11l-5 5z" fill="#62bb8d" />
    <path d="M12.500 6l5-5v11l-5 5z" fill="#f0946f" />
  </Svg>
)

const TorusFeature = () => (
  <Svg w={18} h={18}>
    <ellipse cx="9" cy="9" rx="8.500" ry="6" fill="#5aa9e6" />
    <ellipse cx="9" cy="8.500" rx="3.500" ry="2" fill="#fff" stroke="#4b86b5" />
  </Svg>
)

const FEATURES = [
  { name: "Sketch1", icon: <SketchFeature /> },
  { name: "Extrude1", icon: <ExtrudeFeature /> },
  { name: "Sketch2", icon: <SketchFeature /> },
  { name: "Extrude2", icon: <ExtrudeFeature /> },
  { name: "Sketch3", icon: <SketchFeature /> },
  { name: "Extrude3", icon: <ExtrudeFeature />, rolledBack: true },
  { name: "Form1", icon: <FormFeature />, rolledBack: true },
  { name: "Shell1", icon: <ShellFeature />, rolledBack: true },
  { name: "Move1", icon: <MoveFeature />, rolledBack: true },
  { name: "Move2", icon: <MoveFeature />, rolledBack: true },
  { name: "Plane1", icon: <PlaneFeature />, rolledBack: true },
  { name: "Torus1", icon: <TorusFeature />, rolledBack: true },
  { name: "Move3", icon: <MoveFeature />, rolledBack: true },
]

const PLAYBACK = [
  { name: "Go to start", path: "M1.500 1v12M13 1.500v11L4 7z" },
  { name: "Step back", path: "M10 1.500v11L1 7zM12.500 4.500v5" },
  { name: "Play", path: "M1.500 0l12 7-12 7z" },
  { name: "Step forward", path: "M4.500 1.500v11l9-5.500zM1 4.500v5" },
  { name: "Go to end", path: "M1 1.500v11L10 7zM12.500 1v12" },
]

function Timeline() {
  return (
    <footer className="flex h-[42px] shrink-0 items-stretch overflow-hidden bg-[#f4f4f4] pt-3">
      <div className="-ml-[3px] flex h-[30px] items-center gap-[14px]">
        {PLAYBACK.map((p) => (
          <button key={p.name} type="button" aria-label={p.name}>
            <Svg w={14} h={14}>
              <path d={p.path} fill="#7b7b7b" stroke="#7b7b7b" strokeWidth="1.300" />
            </Svg>
          </button>
        ))}
      </div>
      <div className="relative ml-5 grid w-[345px] grid-cols-13">
        {FEATURES.map((f) => (
          <button key={f.name} type="button" aria-label={f.name} className="flex flex-col items-center justify-between pt-[5px]">
            <span className={f.rolledBack ? "opacity-30" : ""}>{f.icon}</span>
            <span className="h-[3px] w-[2px] bg-[#b5b5b5]" />
          </button>
        ))}
        <Svg w={14} h={32} className="absolute -top-[1px] left-[126px]">
          <path d="M0 0h14v5L8 10v22H6V10L0 5z" fill="#383838" />
        </Svg>
      </div>
      <button type="button" aria-label="Timeline settings" className="mr-2 ml-auto h-[30px]">
        <GearIcon />
      </button>
    </footer>
  )
}

export default function App() {
  const [bannerOpen, setBannerOpen] = useState(true)
  const [paletteOpen, setPaletteOpen] = useState(true)

  const finishSketch = () => setPaletteOpen(false)

  return (
    <div className="flex h-screen flex-col overflow-hidden bg-white pr-[2px] font-['Noto_Sans',sans-serif]">
      <TitleBar />
      <DocumentBar />
      <Ribbon onFinish={finishSketch} />
      {bannerOpen && <UpdateBanner onClose={() => setBannerOpen(false)} />}

      <main className="relative flex min-h-0 flex-1 overflow-hidden">
        <SketchCanvas />
        <div className="relative flex w-[322px] shrink-0 flex-col justify-between py-[5px]">
          <BrowserPanel />
          <CommentsPanel />
        </div>
        <div className="relative flex flex-1 items-end justify-center pr-6 pb-[6px]">
          <NavigationBar />
        </div>
        <div className="relative flex shrink-0 flex-col items-end">
          <div className="h-[80px] pt-[10px] pr-[8px]">
            <ViewCube />
          </div>
          <div className="flex items-start gap-[5px]">
            {paletteOpen && <SketchPalette onFinish={finishSketch} />}
            <AssistantTab />
          </div>
        </div>
      </main>

      <Timeline />
    </div>
  )
}
